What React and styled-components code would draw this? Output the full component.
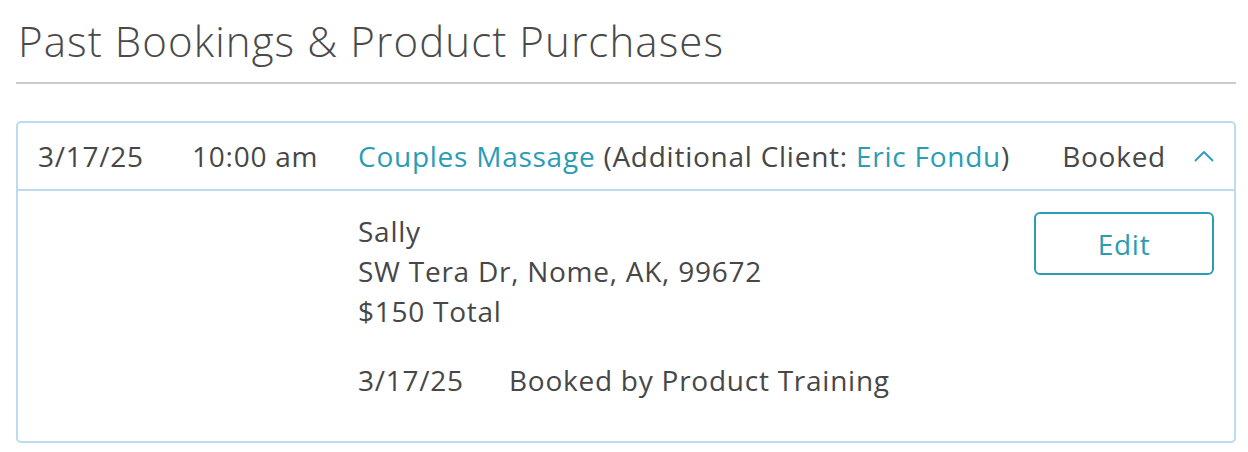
import React from 'react'
import styled, { createGlobalStyle } from 'styled-components'

const GlobalStyle = createGlobalStyle`
  body {
    margin: 0;
    background: #fff;
    font-family: 'Open Sans', 'Liberation Sans', sans-serif;
    color: #474747;
  }
`

const booking = {
  date: '3/17/25',
  time: '10:00 am',
  service: 'Couples Massage',
  extraClient: 'Eric Fondu',
  status: 'Booked',
  client: 'Sally',
  address: 'SW Tera Dr, Nome, AK, 99672',
  total: '$150 Total',
  bookedOn: '3/17/25',
  bookedBy: 'Booked by Product Training'
}

const ChevronUp = () => (
  <svg width="20" height="20" viewBox="0 0 20 20" fill="none">
    <path d="M1.5 14.5L10 6L18.5 14.5" stroke="#2a9db4" strokeWidth="1.8" strokeLinecap="round" strokeLinejoin="round" />
  </svg>
)

const App = () => (
  <Page>
    <GlobalStyle />
    <Title>Past Bookings &amp; Product Purchases</Title>
    <Card>
      <CardHeader>
        <Cell>{booking.date}</Cell>
        <Cell>{booking.time}</Cell>
        <Cell>
          <Link>{booking.service}</Link> (Additional Client: <Link>{booking.extraClient}</Link>)
        </Cell>
        <Status>
          {booking.status}
          <ToggleButton aria-label="collapse"><ChevronUp /></ToggleButton>
        </Status>
      </CardHeader>
      <CardBody>
        <Details>
          <Line>{booking.client}</Line>
          <Line>{booking.address}</Line>
          <Line>{booking.total}</Line>
          <History>
            <span>{booking.bookedOn}</span>
            <span>{booking.bookedBy}</span>
          </History>
        </Details>
        <EditButton>Edit</EditButton>
      </CardBody>
    </Card>
  </Page>
)

const Page = styled.div`
  padding: 10px 12px 10px 16px;
`
const Title = styled.h1`
  margin: 0;
  padding: 7px 0 17px 2px;
  font-size: 42px;
  font-weight: 300;
  letter-spacing: 1.1px;
  line-height: 48px;
  color: #4a4a4a;
  border-bottom: 2px solid #cccccc;
`
const Card = styled.div`
  margin-top: 37px;
  border: 2px solid #bcdcee;
  border-radius: 5px;
  font-size: 28px;
  letter-spacing: 0.75px;
`
const CardHeader = styled.div`
  display: grid;
  grid-template-columns: 154px 166px 1fr auto;
  align-items: center;
  height: 66px;
  padding: 0 20px;
  border-bottom: 2px solid #bcdcee;
`
const Cell = styled.div`
  white-space: nowrap;
`
const Link = styled.span`
  color: #2a9db4;
`
const Status = styled.div`
  display: flex;
  align-items: center;
  gap: 28px;
`
const ToggleButton = styled.button`
  display: flex;
  padding: 0;
  border: none;
  background: none;
`
const CardBody = styled.div`
  display: flex;
  justify-content: space-between;
  align-items: flex-start;
  padding: 20px 20px 41px 340px;
`
const Details = styled.div`
  display: flex;
  flex-direction: column;
`
const Line = styled.div`
  line-height: 40px;
`
const History = styled.div`
  display: grid;
  grid-template-columns: 151px auto;
  line-height: 40px;
  margin-top: 29px;
`
const EditButton = styled.button`
  width: 180px;
  height: 63px;
  margin-top: 1px;
  border: 2px solid #2a9db4;
  border-radius: 6px;
  background: #fff;
  color: #2a9db4;
  font-family: inherit;
  font-size: 28px;
  letter-spacing: 0.75px;
`

export default App
